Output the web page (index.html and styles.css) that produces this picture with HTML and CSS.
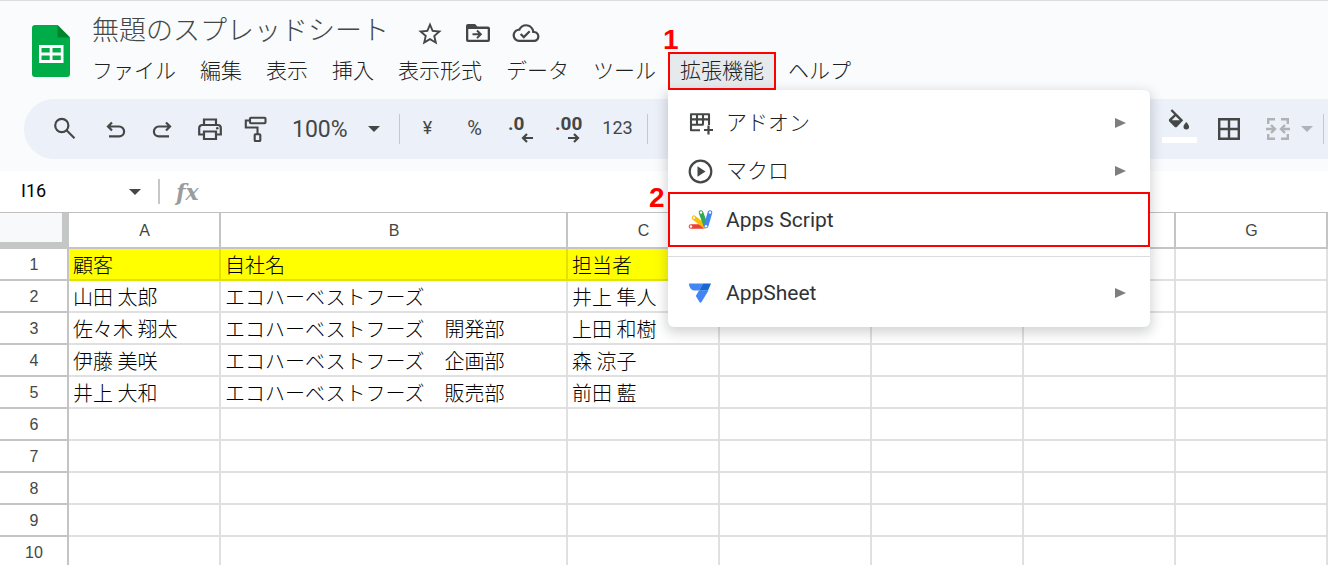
FILE: index.html
```html
<!DOCTYPE html>
<html lang="ja">
<head>
<meta charset="utf-8">
<title>無題のスプレッドシート</title>
<link rel="stylesheet" href="styles.css">
</head>
<body>
<div class="app">
  <header class="header">
    <div class="brand-row">
      <svg class="logo" viewBox="0 0 38 52" width="38" height="52" aria-hidden="true">
        <path fill="#00ac47" d="M3 0h22.500l12.500 12.500V49a3 3 0 0 1-3 3H3a3 3 0 0 1-3-3V3a3 3 0 0 1 3-3z"/>
        <path fill="#00832d" d="M25.500 0 38 12.500H25.500z"/>
        <path fill="#fff" fill-rule="evenodd" d="M7 20h24.500v18H7zM9.500 23v4.500h8.200V23zm11 0v4.500h8.300V23zm-11 7.500V35h8.200v-4.500zm11 0V35h8.300v-4.500z"/>
      </svg>
      <div class="heading">
        <div class="title-row">
          <h1 class="title">無題のスプレッドシート</h1>
          <button class="title-icon" aria-label="スター"><svg viewBox="0 0 24 24" width="28" height="28"><path fill="#444746" d="M22 9.240l-7.190-.62L12 2 9.190 8.630 2 9.240l5.460 4.730L5.820 21 12 17.270 18.180 21l-1.630-7.030L22 9.240zM12 15.400l-3.760 2.270 1-4.280-3.320-2.880 4.380-.38L12 6.100l1.710 4.040 4.380.38-3.320 2.880 1 4.280L12 15.400z"/></svg></button>
          <button class="title-icon" aria-label="移動"><svg viewBox="0 0 28 28" width="28" height="28"><path fill="#444746" fill-rule="evenodd" d="M4 4h7l2.500 2.500H24a2 2 0 0 1 2 2V20a2 2 0 0 1-2 2H4a2 2 0 0 1-2-2V6a2 2 0 0 1 2-2zm.3 5V19.700h19.400V9z"/><path d="M8.500 14.300h8M13 10.500l3.800 3.800-3.800 3.800" fill="none" stroke="#444746" stroke-width="2"/></svg></button>
          <button class="title-icon" aria-label="保存済み"><svg viewBox="0 0 24 24" width="28" height="28"><path fill="#444746" transform="translate(.5 -.3) scale(.96)" d="M19.350 10.040C18.670 6.590 15.640 4 12 4 9.110 4 6.600 5.640 5.350 8.040 2.340 8.360 0 10.910 0 14c0 3.310 2.690 6 6 6h13c2.760 0 5-2.240 5-5 0-2.640-2.050-4.780-4.650-4.960zM19 18H6c-2.210 0-4-1.790-4-4s1.790-4 4-4h.71C7.370 7.690 9.480 6 12 6c3.040 0 5.500 2.460 5.500 5.500v.5H19c1.660 0 3 1.340 3 3s-1.340 3-3 3zm-9-3.820l-2.090-2.090L6.500 13.500 10 17l6.010-6.010-1.410-1.410z"/></svg></button>
        </div>
        <nav class="menubar">
          <button class="menu-button">ファイル</button>
          <button class="menu-button">編集</button>
          <button class="menu-button">表示</button>
          <button class="menu-button">挿入</button>
          <button class="menu-button">表示形式</button>
          <button class="menu-button">データ</button>
          <button class="menu-button">ツール</button>
          <div class="menu-holder">
            <button class="menu-button open" aria-expanded="true">拡張機能</button>
            <span class="step step-one">1</span>
            <div class="dropdown">
              <button class="item">
                <svg viewBox="0 0 28 28" width="28" height="28"><path fill="none" stroke="#444746" stroke-width="2.100" stroke-linejoin="round" d="M14 21.300H5V5.200h18V16M5 10.400h18M5 15.800h12.500M11 5v10.800M17 5v10.800"/><path fill="none" stroke="#444746" stroke-width="2.200" d="M22.500 16.500v9M18 21h9"/></svg>
                <span class="item-label">アドオン</span><span class="arrow"></span>
              </button>
              <button class="item">
                <svg viewBox="0 0 28 28" width="28" height="28"><circle cx="14.500" cy="14.500" r="10.800" fill="none" stroke="#444746" stroke-width="2.200"/><path fill="#444746" d="M11.500 9.300v10.400l8-5.200z"/></svg>
                <span class="item-label">マクロ</span><span class="arrow"></span>
              </button>
              <button class="item highlighted">
                <svg viewBox="0 0 28 28" width="28" height="28"><g fill="none" stroke-width="4.600" stroke-linecap="round"><path stroke="#ea4335" d="M5 20.500H17"/><path stroke="#fbbc04" d="M8 11.800 18.500 20"/><path stroke="#34a853" d="M15 6.500 19.500 19"/><path stroke="#4285f4" d="M24 6.500 20 20"/></g><g fill="#fff"><circle cx="5" cy="20.500" r="1.200"/><circle cx="8" cy="11.800" r="1.200"/><circle cx="15" cy="6.500" r="1.200"/><circle cx="24" cy="6.500" r="1.200"/><circle cx="20" cy="20.300" r="1.200"/></g></svg>
                <span class="item-label">Apps Script</span>
                <span class="step step-two">2</span>
              </button>
              <hr class="separator">
              <button class="item">
                <svg viewBox="0 0 28 28" width="28" height="28"><path fill="#4285f4" d="M3 4.500H17l-4 7H8c-3-.5-5-3.500-5-7zM13 11.500h9.500L15.500 23q-1 1.500-2 0L9.800 17z"/><path fill="#1967d2" d="M17 4.500h8L22 11.500h-9z"/></svg>
                <span class="item-label">AppSheet</span><span class="arrow"></span>
              </button>
            </div>
          </div>
          <button class="menu-button">ヘルプ</button>
        </nav>
      </div>
    </div>
    <div class="toolbar">
      <button class="tool wide" aria-label="検索"><svg viewBox="0 0 28 28" width="28" height="28"><g fill="none" stroke="#444746" stroke-width="2.200"><circle cx="11.800" cy="10.500" r="6.600"/><path d="m16.500 15.200 8 8"/></g></svg></button>
      <button class="tool" aria-label="元に戻す"><svg viewBox="0 0 28 28" width="28" height="28"><path fill="none" stroke="#444746" stroke-width="2.200" d="M10 7.500 6 11.500l4 4M6 11.500h11.200a4.900 4.900 0 0 1 0 9.800H7"/></svg></button>
      <button class="tool" aria-label="やり直し"><svg viewBox="0 0 28 28" width="28" height="28"><path fill="none" stroke="#444746" stroke-width="2.200" d="M17 7.500l4 4-4 4M21 11.500H9.800a4.900 4.900 0 0 0 0 9.800H20"/></svg></button>
      <button class="tool" aria-label="印刷"><svg viewBox="0 0 28 28" width="28" height="28"><g fill="none" stroke="#444746" stroke-width="2.200"><path d="M8 10V4.500h12V10M8 19.500H3.200V13a3 3 0 0 1 3-3h15.600a3 3 0 0 1 3 3v6.500H20"/><path d="M8 16.500h12v7.500H8z"/></g><circle cx="21.300" cy="13.300" r="1.300" fill="#444746"/></svg></button>
      <button class="tool" aria-label="書式の貼り付け"><svg viewBox="0 0 28 28" width="28" height="28"><g fill="none" stroke="#444746" stroke-width="2.100"><rect x="7" y="2.800" width="15.500" height="5.400" rx="1"/><path d="M7 5.500H2.800v7H14.500v7"/><rect x="11.700" y="19.200" width="5.600" height="6.800" rx=".8"/></g></svg></button>
      <button class="zoom">100%<span class="caret"></span></button>
      <span class="divider"></span>
      <button class="tool text">¥</button>
      <button class="tool text percent">%</button>
      <button class="tool decimal" aria-label="小数点以下の桁数を減らす"><span>.0</span><svg viewBox="0 0 12 10" width="12" height="10"><path d="M12 5H2M6 1 2 5l4 4" fill="none" stroke="#444746" stroke-width="2.200"/></svg></button>
      <button class="tool decimal" aria-label="小数点以下の桁数を増やす"><span>.00</span><svg viewBox="0 0 12 10" width="12" height="10"><path d="M0 5h10M6 1l4 4-4 4" fill="none" stroke="#444746" stroke-width="2.200"/></svg></button>
      <button class="tool text number">123</button>
      <span class="divider"></span>
      <div class="tools-right">
        <button class="tool fill" aria-label="塗りつぶしの色"><svg viewBox="0 0 28 28" width="28" height="28"><path fill="#444746" fill-rule="evenodd" d="m5.500 1.800 1.700-1.600 11 11-6.100 6.600q-1.300 1-2.600 0l-5.200-5.200q-1-1.300 0-2.600l4.900-4.600zm5.200 5.400-4 4h8.100zM21.300 13s2.800 3 2.800 4.700a2.800 2.800 0 0 1-5.600 0c0-1.700 2.800-4.700 2.800-4.700z"/></svg><span class="swatch"></span></button>
        <button class="tool" aria-label="枠線"><svg viewBox="0 0 28 28" width="28" height="28"><path fill="none" stroke="#444746" stroke-width="2.400" d="M4.200 4.200h19.600v19.600H4.200zM14 4v20M4 14h20"/></svg></button>
        <button class="tool merge" aria-label="セルを結合"><svg viewBox="0 0 28 28" width="28" height="28"><path fill="none" stroke="#b0b3b5" stroke-width="2.400" d="M12 4.200H5.200V9M18 4.200h6.800V9M12 23.800H5.200V19M18 23.800h6.800V19M3 14h8M8 10l4 4-4 4M27 14h-8M22 10l-4 4 4 4"/></svg><span class="caret pale"></span></button>
        <span class="divider"></span>
      </div>
    </div>
  </header>
  <div class="formula-bar">
    <input class="name-box" aria-label="名前ボックス" value="I16">
    <span class="caret"></span>
    <span class="divider short"></span>
    <span class="fx">fx</span>
  </div>
  <table class="sheet">
    <colgroup><col class="col-number"><col class="col-normal"><col class="col-wide"><col class="col-normal"><col class="col-normal"><col class="col-normal"><col class="col-normal"><col class="col-normal"></colgroup>
    <thead><tr><td class="corner"></td><th>A</th><th>B</th><th>C</th><th></th><th></th><th></th><th>G</th></tr></thead>
    <tbody>
      <tr class="labels"><th>1</th><td>顧客</td><td>自社名</td><td>担当者</td><td></td><td></td><td></td><td></td></tr>
      <tr><th>2</th><td>山田 太郎</td><td>エコハーベストフーズ</td><td>井上 隼人</td><td></td><td></td><td></td><td></td></tr>
      <tr><th>3</th><td>佐々木 翔太</td><td>エコハーベストフーズ　開発部</td><td>上田 和樹</td><td></td><td></td><td></td><td></td></tr>
      <tr><th>4</th><td>伊藤 美咲</td><td>エコハーベストフーズ　企画部</td><td>森 涼子</td><td></td><td></td><td></td><td></td></tr>
      <tr><th>5</th><td>井上 大和</td><td>エコハーベストフーズ　販売部</td><td>前田 藍</td><td></td><td></td><td></td><td></td></tr>
      <tr><th>6</th><td></td><td></td><td></td><td></td><td></td><td></td><td></td></tr>
      <tr><th>7</th><td></td><td></td><td></td><td></td><td></td><td></td><td></td></tr>
      <tr><th>8</th><td></td><td></td><td></td><td></td><td></td><td></td><td></td></tr>
      <tr><th>9</th><td></td><td></td><td></td><td></td><td></td><td></td><td></td></tr>
      <tr><th>10</th><td></td><td></td><td></td><td></td><td></td><td></td><td></td></tr>
    </tbody>
  </table>
</div>
</body>
</html>
```
FILE: styles.css
```css
* { box-sizing: border-box; }
body {
  margin: 0;
  background: #fff;
  color: #1f1f1f;
  font-family: Roboto, "Noto Sans CJK JP", sans-serif;
}
button {
  border: 0;
  padding: 0;
  background: none;
  color: inherit;
  font: inherit;
}
svg { display: block; flex: none; }
.app { height: 100vh; overflow: hidden; }

/* Header */
.header {
  border-top: 1px solid #dadce0;
  background: #f9fbfd;
  padding-bottom: 12px;
}
.brand-row { display: flex; padding-left: 32px; }
.logo { margin-top: 24px; }
.heading { padding-left: 10px; }
.title-row {
  display: flex;
  align-items: center;
  height: 51px;
  padding: 8px 0 0 12px;
  gap: 20px;
}
.title {
  margin: 0 7px 0 0;
  color: #444746;
  font-size: 27px;
  font-weight: 300;
  line-height: 40px;
}
.title-icon { width: 28px; height: 28px; margin-top: 7px; }
.menubar { display: flex; height: 38px; }
.menu-button {
  height: 38px;
  padding: 0 12px;
  font-size: 21px;
  font-weight: 300;
  line-height: 34px;
  white-space: nowrap;
}
.menu-button.open {
  border: 2px solid #f00;
  padding: 0 10px;
  background: #e7eaed;
}
.menu-holder { position: relative; }
.step {
  position: absolute;
  color: #f00;
  font: 700 28px/28px "Liberation Sans", sans-serif;
}
.step-one { left: -5px; top: -26px; }
.step-two { left: -21px; top: -10px; }

/* Extensions menu */
.dropdown {
  position: absolute;
  z-index: 2;
  top: 38px;
  left: 0;
  width: 482px;
  padding: 9px 0 10px;
  border-radius: 0 6px 6px 6px;
  background: #fff;
  box-shadow: 0 4px 12px 2px rgba(60, 64, 67, .22);
}
.item {
  position: relative;
  display: flex;
  align-items: center;
  gap: 12px;
  width: 100%;
  height: 48px;
  padding: 0 24px 0 18px;
  text-align: left;
  font-size: 21px;
  font-weight: 300;
  line-height: 28px;
}
.item.highlighted {
  height: 55px;
  margin-top: -3px;
  border: 2px solid #f00;
  padding-left: 16px;
}
.item.highlighted .item-label, .item:last-child .item-label { color: #303336; font-weight: 400; }
.item-label { flex: 1; }
.arrow {
  border-left: 11px solid #7c7e80;
  border-top: 5px solid transparent;
  border-bottom: 5px solid transparent;
}
.separator {
  height: 1px;
  margin: 9px 0 12px;
  border: 0;
  background: #dadce0;
}

/* Toolbar */
.toolbar {
  display: flex;
  align-items: center;
  height: 60px;
  margin: 9px 0 0 24px;
  padding-left: 12px;
  border-radius: 30px 0 0 30px;
  background: #ecf0f9;
  color: #444746;
}
.tool {
  display: flex;
  align-items: center;
  justify-content: center;
  width: 47px;
  height: 40px;
}
.tool.wide { width: 56px; }
.tool.text { padding-bottom: 3px; font-size: 18px; }
.tool.percent { font-size: 20px; }
.tool.number { width: 55px; padding-right: 4px; }
.zoom {
  display: flex;
  align-items: center;
  gap: 20px;
  width: 119px;
  padding-left: 12px;
  font-size: 23px;
}
.caret {
  flex: none;
  border-top: 6px solid #444746;
  border-left: 6px solid transparent;
  border-right: 6px solid transparent;
}
.caret.pale { border-top-color: #b0b3b5; }
.divider { flex: none; width: 1px; height: 30px; margin-right: 4px; background: #c7c7c7; }
.decimal {
  flex-direction: column;
  align-items: flex-start;
  padding-left: 10px;
  font: 700 19px/18px Roboto, sans-serif;
}
.decimal svg { margin: 0 0 0 13px; }
.tools-right { display: flex; align-items: center; margin-left: auto; }
.fill { flex-direction: column; width: 52px; padding-bottom: 6px; }
.swatch { width: 35px; height: 6px; background: #fff; }
.merge { gap: 10px; width: 71px; }

/* Formula bar */
.formula-bar { display: flex; align-items: center; height: 41px; background: #fff; }
.name-box {
  width: 129px;
  border: 0;
  padding: 0 0 2px 21px;
  background: none;
  color: #000;
  font: 400 18px/24px Roboto, sans-serif;
}
.divider.short { width: 2px; height: 25px; margin: 0 16px 0 17px; }
.fx { color: #9a9c9e; font: italic 700 22px/24px "DejaVu Serif", serif; }

/* Grid */
.sheet {
  width: 100%;
  table-layout: fixed;
  border-collapse: separate;
  border-spacing: 0;
  border-top: 1px solid #c0c0c0;
}
.col-number { width: 69px; }
.col-normal { width: 152px; }
.col-wide { width: 347px; }
.sheet th, .sheet td { overflow: hidden; padding: 0; white-space: nowrap; }
.sheet th {
  border-right: 2px solid #c4c4c4;
  border-bottom: 2px solid #c4c4c4;
  padding: 2px 0 0 1px;
  color: #444746;
  font: 400 16px/28px "Liberation Sans", sans-serif;
}
.sheet thead th { height: 36px; }
.sheet .corner {
  border: solid #c4c7c5;
  border-width: 0 7px 7px 0;
  background: #f8f9fa;
}
.sheet tbody td {
  height: 32px;
  padding: 2px 0 0 4px;
  border-right: 2px solid #e0e0e0;
  border-bottom: 2px solid #e0e0e0;
  color: #000;
  font: 300 20px/28px "Noto Sans CJK JP", sans-serif;
}
.labels td:nth-child(-n+4) { background: #ff0; border-color: #e2e200; }
```
